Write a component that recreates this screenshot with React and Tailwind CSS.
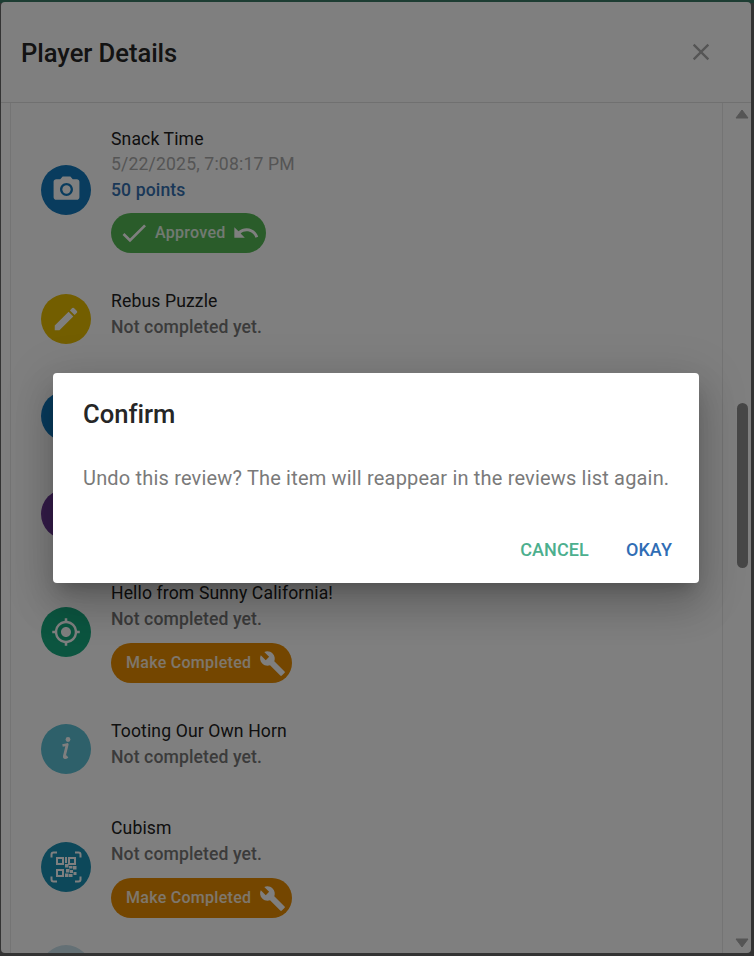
import { MdPhotoCamera, MdEdit, MdBuild, MdCheck, MdUndo, MdGpsFixed, MdClose } from 'react-icons/md';

const MakeCompleted = () => (
  <button className="mt-[11px] flex h-10 w-[181px] items-center rounded-full bg-[#e88c00] pl-[15px] text-base font-medium tracking-[0.28px] text-white/85">
    <span>Make Completed</span>
    <MdBuild size={27} className="ml-[8px] text-white" />
  </button>
);

const InfoIcon = () => (
  <svg width="50" height="50" viewBox="0 0 50 50" fill="none" stroke="currentColor">
    <circle cx="27" cy="15.5" r="2.4" fill="currentColor" stroke="none" />
    <path d="M21.5 21.5 L26.2 20.5 L23.4 32 Q23 35 26.5 32.5" strokeWidth="2.8" strokeLinejoin="round" />
  </svg>
);

const QrIcon = () => (
  <svg width="50" height="50" viewBox="0 0 50 50" fill="none" stroke="currentColor" strokeWidth="2">
    <path d="M10.5 15.5 V12.5 a2 2 0 0 1 2-2 H16" />
    <path d="M34 10.5 H37.5 a2 2 0 0 1 2 2 V15.5" />
    <path d="M10.5 34.5 V37.5 a2 2 0 0 0 2 2 H16" />
    <path d="M34 39.5 H37.5 a2 2 0 0 0 2-2 V34.5" />
    <rect x="16" y="16" width="6" height="6" />
    <rect x="28" y="16" width="6" height="6" />
    <rect x="16" y="28" width="6" height="6" />
    <g fill="currentColor" stroke="none">
      <rect x="24" y="15" width="2" height="6" />
      <rect x="24" y="22" width="3.5" height="3.5" />
      <rect x="28" y="24" width="3.5" height="2.5" />
      <rect x="32" y="24" width="3.5" height="3.5" />
      <rect x="25" y="27" width="3.5" height="3.5" />
      <rect x="29" y="28" width="3" height="3" />
      <rect x="32.5" y="30" width="3" height="3" />
      <rect x="24" y="31.5" width="3.5" height="3.5" />
      <rect x="28" y="32" width="3.5" height="3" />
    </g>
  </svg>
);

const Row = ({ color, icon, title, children }) => (
  <div className="flex shrink-0 items-center gap-5">
    <div className={`flex h-[50px] w-[50px] shrink-0 items-center justify-center rounded-full text-white ${color}`}>
      {icon}
    </div>
    <div className="flex flex-col items-start">
      <div className="text-[17.6px] leading-[26px] tracking-[0.12px] text-[#212121]">{title}</div>
      {children}
    </div>
  </div>
);

const NotCompleted = ({ last }) => (
  <div className={`text-[17.6px] font-medium leading-[26px] tracking-[0.1px] text-[#777777] ${last ? 'pb-[10px]' : ''}`}>Not completed yet.</div>
);

// rows that sit fully behind the confirm dialog, only the circle edge shows
const HiddenRow = ({ color, extra }) => (
  <div className={`flex shrink-0 items-center ${extra}`}>
    <div className={`h-[50px] w-[50px] rounded-full ${color}`} />
  </div>
);

export default function App() {
  return (
    <div className="relative h-[956px] w-[754px] overflow-hidden bg-[#666666] font-['Roboto',sans-serif]">
      <div className="h-[3px] bg-[#3a7a66]" />

      {/* Player details dialog */}
      <div className="absolute left-[1px] top-[2px] flex h-[951px] w-[750px] flex-col overflow-hidden rounded-[4px] bg-white">
        <div className="flex h-[101px] shrink-0 items-center justify-between border-b border-[#e0e0e0] pl-5 pr-[36px]">
          <h2 className="mt-[2px] text-[25.6px] font-medium tracking-[-0.05px] text-[#262626]">Player Details</h2>
          <MdClose size={28} className="text-[#aaaaaa]" />
        </div>
        <div className="flex min-h-0 flex-1">
          <div className="ml-[9px] flex min-w-0 flex-1 flex-col gap-[35px] overflow-hidden border-l border-r border-[#e8e8e8] pl-[30px] pt-[23px]">
            <Row color="bg-[#1278bc]" icon={<MdPhotoCamera size={31} />} title="Snack Time">
              <div className="text-[17.6px] leading-[25.5px] tracking-[0.165px] text-[#aaaaaa]">5/22/2025, 7:08:17 PM</div>
              <div className="text-[17.6px] font-medium leading-[25.5px] tracking-[0.12px] text-[#3570b0]">50 points</div>
              <button className="mt-[10px] flex h-10 w-[155px] items-center rounded-full bg-[#54b854] pl-[7px] text-base font-medium tracking-[0.28px] text-white/85">
                <MdCheck size={32} className="text-white" />
                <span className="ml-[5px]">Approved</span>
                <MdUndo size={28} className="ml-[6px] text-white" />
              </button>
            </Row>
            <Row color="bg-[#e6bc00]" icon={<MdEdit size={30} />} title="Rebus Puzzle">
              <NotCompleted last />
            </Row>
            <HiddenRow color="bg-[#1278bc]" extra="h-[62px]" />
            <HiddenRow color="bg-[#6a3894]" extra="h-[63px]" />
            <Row color="bg-[#18ab80]" icon={<MdGpsFixed size={30} />} title="Hello from Sunny California!">
              <NotCompleted />
              <MakeCompleted />
            </Row>
            <Row color="bg-[#5cc0d4]" icon={<InfoIcon />} title="Tooting Our Own Horn">
              <NotCompleted last />
            </Row>
            <Row color="bg-[#1a90b4]" icon={<QrIcon />} title="Cubism">
              <NotCompleted />
              <MakeCompleted />
            </Row>
            <HiddenRow color="bg-[#c8e0ea]" extra="-mt-[8px]" />
          </div>

          {/* scrollbar */}
          <div className="flex w-[28px] shrink-0 flex-col items-center pl-[10px] pt-[6px] pb-[5px]">
            <svg width="14" height="10" viewBox="0 0 14 10" className="text-[#aaaaaa]">
              <path d="M7 1 L13 9 H1 Z" fill="currentColor" stroke="currentColor" strokeLinejoin="round" />
            </svg>
            <div className="mt-[284px] h-[165px] w-[11px] rounded-full bg-[#8f8f8f]" />
            <div className="flex-1" />
            <svg width="14" height="10" viewBox="0 0 14 10" className="text-[#aaaaaa]">
              <path d="M1 1 H13 L7 9 Z" fill="currentColor" stroke="currentColor" strokeLinejoin="round" />
            </svg>
          </div>
        </div>
      </div>

      <div className="absolute inset-0 bg-black/50" />

      {/* Confirm dialog */}
      <div className="absolute left-[53px] top-[373px] flex h-[210px] w-[646px] flex-col rounded-[4px] bg-white pl-[30px] shadow-[0_11px_15px_-7px_rgba(0,0,0,0.2),0_24px_38px_3px_rgba(0,0,0,0.14),0_9px_46px_8px_rgba(0,0,0,0.12)]">
        <h2 className="mt-[23px] text-[25.6px] font-medium leading-[36px] text-[#262626] [font-variant-ligatures:none]">Confirm</h2>
        <p className="mt-[32px] text-[20px] leading-[28px] tracking-[0.18px] text-[#7a7a7a]">
          Undo this review? The item will reappear in the reviews list again.
        </p>
        <div className="mt-auto flex justify-end gap-[37px] pb-[19px] pr-[27px] text-lg font-medium tracking-[0.1px]">
          <button className="text-[#4caf8e]">CANCEL</button>
          <button className="text-[#2f6db5]">OKAY</button>
        </div>
      </div>
    </div>
  );
}
